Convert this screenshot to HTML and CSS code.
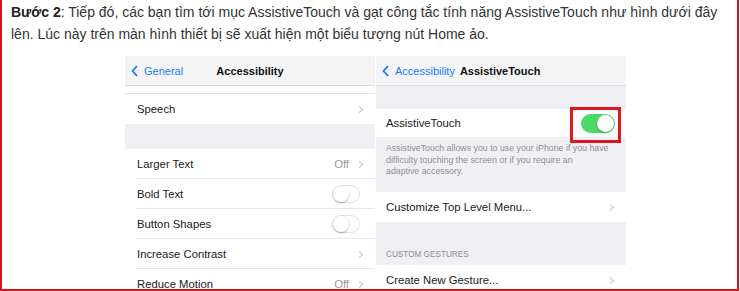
FILE: index.html
```html
<!DOCTYPE html>
<html lang="vi">
<head>
<meta charset="utf-8">
<title>Bước 2 - AssistiveTouch</title>
<link rel="stylesheet" href="styles.css">
</head>
<body>
<div class="post">
  <p class="intro"><b>Bước 2</b>: Tiếp đó, các bạn tìm tới mục AssistiveTouch và gạt công tắc tính năng AssistiveTouch như hình dưới đây lên. Lúc này trên màn hình thiết bị sẽ xuất hiện một biểu tượng nút Home ảo.</p>
  <div class="shots">
    <div class="phone">
      <div class="nav">
        <span class="back"><svg class="back-ico" width="7" height="12" viewBox="0 0 7 12"><polyline points="6,1 1.5,6 6,11" fill="none" stroke="#1a7cf5" stroke-width="1.8"/></svg>General</span>
        <span class="title">Accessibility</span>
      </div>
      <div class="gap g-top"></div>
      <div class="row"><span class="label">Speech</span><span class="chev"></span></div>
      <div class="gap g-mid"></div>
      <div class="row sep"><span class="label">Larger Text</span><span class="detail">Off</span><span class="chev"></span></div>
      <div class="row sep"><span class="label">Bold Text</span><span class="toggle"></span></div>
      <div class="row sep"><span class="label">Button Shapes</span><span class="toggle"></span></div>
      <div class="row sep"><span class="label">Increase Contrast</span><span class="chev"></span></div>
      <div class="row"><span class="label">Reduce Motion</span><span class="detail">Off</span><span class="chev"></span></div>
    </div>
    <div class="phone right">
      <div class="nav">
        <span class="back"><svg class="back-ico" width="7" height="12" viewBox="0 0 7 12"><polyline points="6,1 1.5,6 6,11" fill="none" stroke="#1a7cf5" stroke-width="1.8"/></svg>Accessibility</span>
        <span class="title inline">AssistiveTouch</span>
      </div>
      <div class="gap g-at"></div>
      <div class="row at-row"><span class="label">AssistiveTouch</span><span class="toggle on"></span></div>
      <div class="footer">AssistiveTouch allows you to use your iPhone if you have difficulty touching the screen or if you require an<br>adaptive accessory.</div>
      <div class="row"><span class="label">Customize Top Level Menu...</span><span class="chev"></span></div>
      <div class="header">CUSTOM GESTURES</div>
      <div class="row"><span class="label">Create New Gesture...</span><span class="chev"></span></div>
      <div class="mark"></div>
    </div>
  </div>
</div>
</body>
</html>
```
FILE: styles.css
```css
html, body {
  margin: 0;
  padding: 0;
  background: #fff;
}
.post {
  box-sizing: border-box;
  width: 739px;
  height: 291px;
  border: 2px solid #d3161d;
  border-top: none;
  overflow: hidden;
  font-family: "Liberation Sans", Arial, sans-serif;
}
.intro {
  margin: 2px 0 0 0;
  padding: 0 8px 0 9px;
  font-size: 14px;
  line-height: 21.5px;
  color: #333;
}
.intro b { color: #222; }
.shots {
  display: flex;
  gap: 1px;
  margin-left: 123px;
  margin-top: 0;
}
.phone {
  position: relative;
  width: 250px;
  padding-top: 11px;
  background: #fff;
  font-family: "Liberation Sans", Arial, sans-serif;
  color: #1a1a1a;
}
.nav {
  position: relative;
  height: 30px;
  background: #f4f4f5;
  border-bottom: 1px solid #dcdcde;
  box-sizing: border-box;
  display: flex;
  align-items: center;
  padding-left: 6px;
  font-size: 11px;
}
.back {
  display: flex;
  align-items: center;
  gap: 6px;
  color: #1a7cf5;
}
.back-ico { display: block; }
.title {
  position: absolute;
  left: 0;
  right: 0;
  text-align: center;
  font-weight: bold;
  color: #111;
  pointer-events: none;
}
.title.inline {
  position: static;
  margin-left: 5px;
}
.gap {
  background: #efeff4;
}
.g-top { height: 7px; background: #fff; border-bottom: 1px solid #e4e4e6; }
.g-mid { height: 25px; }
.g-at { height: 23px; }
.row {
  position: relative;
  height: 30px;
  display: flex;
  align-items: center;
  padding: 0 10px 0 12px;
  font-size: 11.3px;
  background: #fff;
}
.row.sep::after {
  content: "";
  position: absolute;
  left: 11px;
  right: 0;
  bottom: 0;
  border-bottom: 1px solid #e6e6e8;
}
.right .row { padding-left: 10px; }
.at-row { height: 28px; }
.label { flex: 1; }
.detail {
  color: #9a9a9e;
  margin-right: 8px;
}
.chev {
  width: 4px;
  height: 4px;
  border-top: 1px solid #c4c4c8;
  border-right: 1px solid #c4c4c8;
  transform: rotate(45deg);
  margin-right: 3px;
}
.toggle {
  position: relative;
  width: 28px;
  height: 18px;
  border-radius: 10px;
  border: 1px solid #e2e2e4;
  background: #fff;
  box-sizing: border-box;
  margin-right: 5px;
}
.toggle::after {
  content: "";
  position: absolute;
  left: 0;
  top: 0;
  width: 16px;
  height: 16px;
  border-radius: 50%;
  background: #fff;
  box-shadow: 0 1px 2px rgba(0,0,0,0.3);
}
.toggle.on {
  width: 34px;
  height: 19px;
  background: #4cd964;
  border-color: #4cd964;
  margin-right: 1px;
}
.toggle.on::after {
  left: auto;
  right: 0;
  width: 17px;
  height: 17px;
}
.footer {
  height: 55px;
  box-sizing: border-box;
  background: #efeff4;
  padding: 6px 8px 0 10px;
  font-size: 8.8px;
  line-height: 11.5px;
  color: #8e8e93;
}
.header {
  height: 43px;
  box-sizing: border-box;
  background: #efeff4;
  display: flex;
  align-items: flex-end;
  padding: 0 0 6px 10px;
  font-size: 8.2px;
  color: #8e8e93;
}
.mark {
  position: absolute;
  left: 194px;
  top: 62px;
  width: 51px;
  height: 36px;
  box-sizing: border-box;
  border: 3px solid #e0161d;
}
```
